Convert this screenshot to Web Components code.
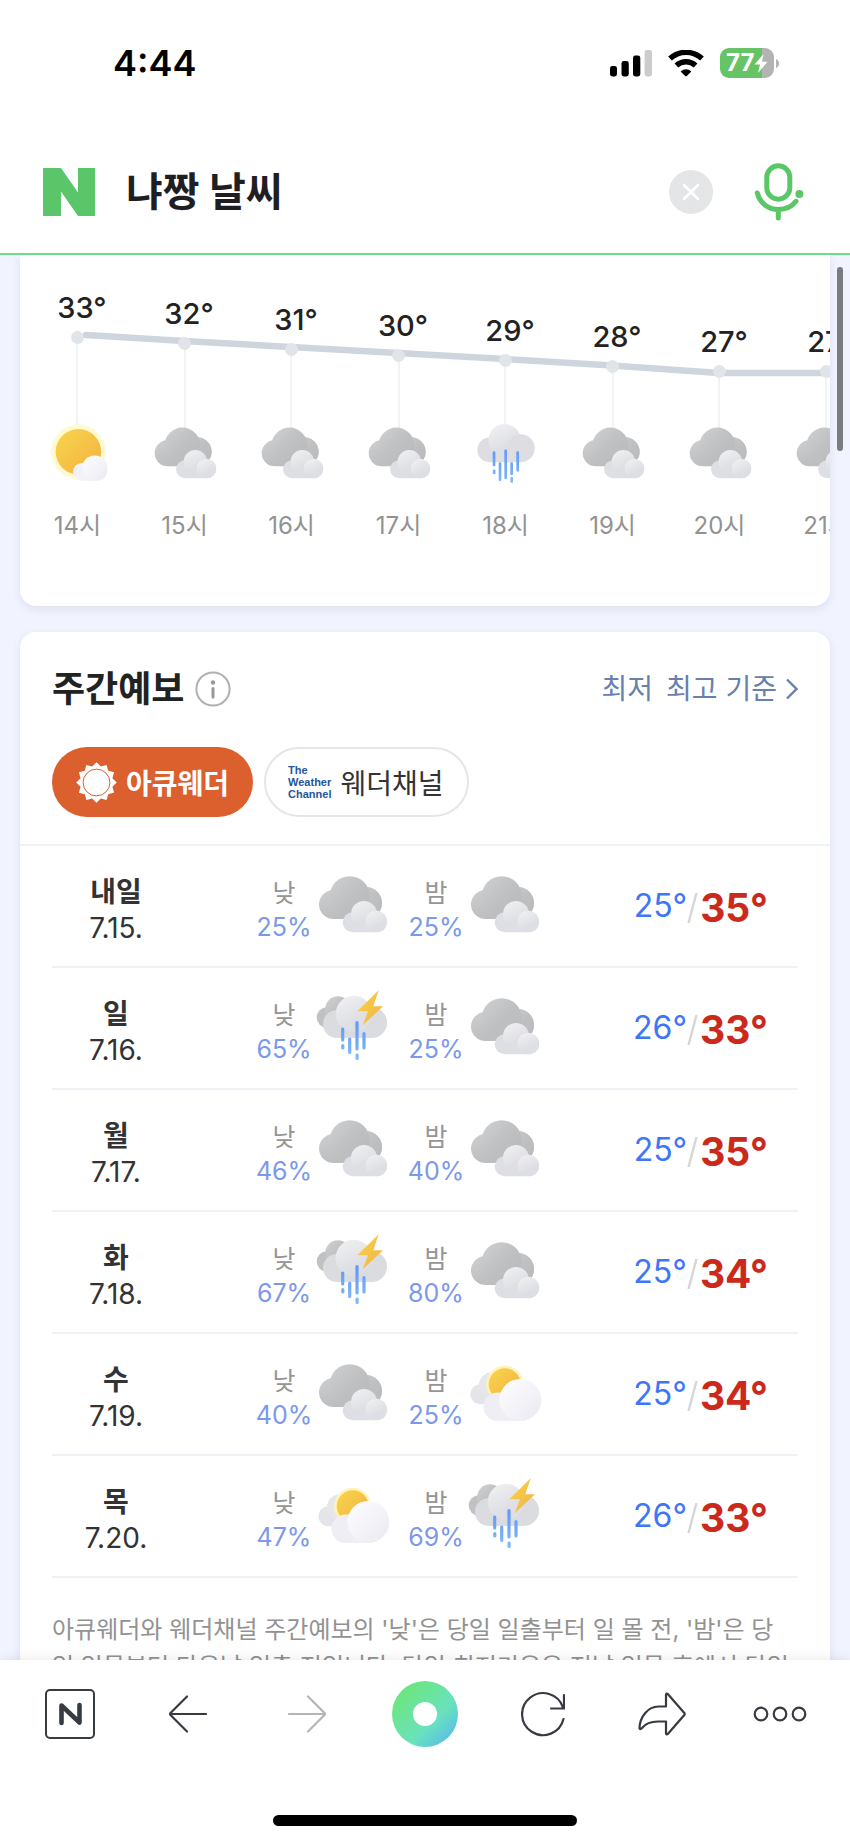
<!DOCTYPE html>
<html lang="ko">
<head>
<meta charset="utf-8">
<meta name="viewport" content="width=device-width, initial-scale=1">
<title>냐짱 날씨</title>
<style>
  body {
    margin: 0;
    font-family: Inter, "Noto Sans CJK KR", sans-serif;
    color: #222;
    background-color: #fff;
  }
</style>
</head>
<body>
<weather-app></weather-app>

<script>
/**
 * Creates a template element from markup.
 *
 * @param {string} html - The markup.
 * @returns {HTMLTemplateElement} The template.
 */
const createTemplate = (html) => {
  const template = document.createElement('template')
  template.innerHTML = html
  return template
}

// Drawings of the weather states, all on a 72 x 72 canvas.
const drawings = {
  cloudy: `
    <g fill="url(#dark)">
      <path d="M17.5 20A14.5 14.5 0 0 0 17.5 49H50A15.7 15.7 0 1 0 50 17Z"/>
      <circle cx="50.3" cy="33" r="15.7"/>
      <circle cx="33.7" cy="26.2" r="20"/>
    </g>
    <rect x="26.7" y="42.3" width="44.4" height="20" rx="10" fill="#dedfe4"/>
    <circle cx="48" cy="44" r="13" fill="url(#light)"/>
    <circle cx="60.3" cy="51.5" r="10.8" fill="url(#light)"/>`,
  sunny: `
    <circle cx="37" cy="33" r="30.5" fill="#fff9d4"/>
    <circle cx="37" cy="33" r="25.2" fill="url(#sun)"/>
    <rect x="31" y="45.4" width="38" height="19.6" rx="9.8" fill="#f1f1f8"/>
    <circle cx="55.2" cy="51" r="14" fill="url(#white)"/>`,
  partly: `
    <rect x="2.3" y="26.3" width="34" height="20" rx="10" fill="#e5e5e9"/>
    <circle cx="24" cy="27.3" r="13" fill="#e7e7eb"/>
    <circle cx="36.7" cy="26.3" r="18.5" fill="#fff3b5"/>
    <circle cx="36.7" cy="26.3" r="16" fill="url(#sun)"/>
    <rect x="15.4" y="34.4" width="50" height="28.6" rx="14.3" fill="#eeeef4"/>
    <circle cx="52.3" cy="42" r="21" fill="url(#white)"/>`,
  rain: `
    <rect x="4.8" y="17.3" width="52" height="27.2" rx="13.6" fill="#dddde2"/>
    <circle cx="35" cy="20.3" r="18" fill="url(#light)"/>
    <path d="M35 30H53V44.5H35Z" fill="#dddde2"/>
    <circle cx="53" cy="29.1" r="15.4" fill="#dddde2"/>
    <path stroke="url(#drop)" stroke-width="3" stroke-linecap="round" d="M23.3 34V47.5M23.4 54V56.5M29.9 46V64M36.2 32V62M42.8 46V57.5M42.9 62.5V66M49.5 34V53.5"/>`,
  storm: `
    <rect x=".7" y="15.3" width="30" height="20.4" rx="10.2" fill="#bfc1c3"/>
    <circle cx="22" cy="17" r="12.8" fill="url(#dark)"/>
    <rect x="7" y="18" width="60" height="28" rx="14" fill="#dbdce0"/>
    <circle cx="55.7" cy="30.6" r="15.4" fill="#dbdce0"/>
    <circle cx="37.7" cy="21.7" r="18" fill="url(#light)"/>
    <path d="M62.7 -1.7 41.3 19.3H52L46.7 33.3 67 14.3H57.3Z" fill="url(#sun)"/>
    <path stroke="url(#drop)" stroke-width="3.2" stroke-linecap="round" d="M26.7 37V48M26.8 53.5V56M33.7 47V60.5M41 30.5V57M41.1 63V66.5M48 41.5V56"/>`
}

customElements.define('weather-icon',
  /**
   * Represents a picture of a weather state.
   */
  class extends HTMLElement {
    constructor () {
      super()
      this.attachShadow({ mode: 'open' })
    }

    connectedCallback () {
      this.shadowRoot.innerHTML = `
<style>
    :host {
        display: block;
        width: var(--icon-size, 72px);
        height: var(--icon-size, 72px);
        flex: none;
    }

    svg {
        display: block;
        width: 100%;
        height: 100%;
        overflow: visible;
    }
</style>
<svg viewBox="0 0 72 72" aria-hidden="true">
    <defs>
        <linearGradient id="dark" x1="0" y1="0" x2="1" y2="1">
            <stop offset=".1" stop-color="#cbcdce"/><stop offset=".5" stop-color="#bfc0c2"/><stop offset="1" stop-color="#b7b9bb"/>
        </linearGradient>
        <linearGradient id="light" x1=".2" y1="0" x2=".7" y2="1">
            <stop offset="0" stop-color="#f0f0f2"/><stop offset=".7" stop-color="#dedfe4"/>
        </linearGradient>
        <linearGradient id="white" x1="0" y1="0" x2="1" y2="1">
            <stop offset=".15" stop-color="#fbfbfe"/><stop offset=".8" stop-color="#ededf4"/>
        </linearGradient>
        <linearGradient id="sun" x1="0" y1="0" x2="1" y2="1">
            <stop offset=".1" stop-color="#f8d14c"/><stop offset="1" stop-color="#f2b140"/>
        </linearGradient>
        <linearGradient id="drop" gradientUnits="userSpaceOnUse" x1="0" y1="30" x2="0" y2="68">
            <stop offset="0" stop-color="#5f98f7"/><stop offset="1" stop-color="#83bafa"/>
        </linearGradient>
    </defs>
    ${drawings[this.getAttribute('state')]}
</svg>`
    }
  }
)

const statusTemplate = createTemplate(`
<style>
    :host {
        display: flex;
        align-items: center;
        justify-content: space-between;
        height: 126px;
        padding: 0 71px 0 113px;
        color: #000;
    }

    time {
        font-size: 36px;
        font-weight: 600;
    }

    .system {
        display: flex;
        align-items: center;
        gap: 16px;
    }

    svg {
        display: block;
    }

    .battery {
        display: flex;
        align-items: center;
        gap: 2px;
    }

    .charge {
        display: flex;
        align-items: center;
        box-sizing: border-box;
        width: 54px;
        height: 30px;
        padding-left: 6px;
        border-radius: 9px;
        background: linear-gradient(90deg, #66c466 78%, #b3b3b3 78%);
        color: #fff;
        font-size: 24px;
        font-weight: 700;
        line-height: 30px;
    }
</style>
<time>4:44</time>
<div class="system">
    <svg width="42" height="27" viewBox="0 0 42 27">
        <rect y="16" width="7" height="10.5" rx="2.4"/><rect x="11.5" y="11" width="7.3" height="15.5" rx="2.4"/>
        <rect x="23" y="5.5" width="7.3" height="21" rx="2.4"/><rect x="34.6" width="7.4" height="26.5" rx="2.4" fill="#ccc"/>
    </svg>
    <svg width="36" height="27" viewBox="0 0 36 27">
        <g fill="none" stroke="#000" stroke-width="5.4"><path d="M2 8.6A23.5 23.5 0 0 1 34 8.6"/><path d="M8.4 15.5A14 14 0 0 1 27.6 15.5"/></g>
        <path d="M12.6 21.4Q18 17 23.4 21.4L18.8 26.1Q18 26.8 17.2 26.1Z"/>
    </svg>
    <div class="battery">
        <div class="charge">
            <span>77</span>
            <svg width="14" height="19" viewBox="0 0 14 19"><path fill="#fff" d="M9.500 0 .500 10.500H6L4 19 13.500 7.800H8Z"/></svg>
        </div>
        <svg width="3" height="9" viewBox="0 0 3 9"><path d="M0 0Q3 1.5 3 4.5T0 9Z" fill="#b3b3b3"/></svg>
    </div>
</div>
`)

customElements.define('status-bar',
  /**
   * Represents the status bar of the phone.
   */
  class extends HTMLElement {
    constructor () {
      super()
      this.attachShadow({ mode: 'open' }).appendChild(statusTemplate.content.cloneNode(true))
    }
  }
)

const searchTemplate = createTemplate(`
<style>
    :host {
        display: block;
        border-bottom: 2px solid #6fdc8b;
    }

    form {
        display: flex;
        align-items: center;
        box-sizing: border-box;
        height: 127px;
        padding: 4px 46px 0 43px;
    }

    a, button {
        display: block;
        flex: none;
        padding: 0;
        border: 0;
        background: none;
    }

    svg {
        display: block;
    }

    input {
        flex: 1;
        min-width: 0;
        margin: 0 31px;
        padding: 0;
        border: 0;
        outline: 0;
        background: none;
        font: 700 40px/60px Inter, "Noto Sans CJK KR", sans-serif;
        color: #1f1f23;
    }

    .voice {
        margin-left: 41px;
    }
</style>
<form>
    <a href="#" aria-label="NAVER">
        <svg width="52" height="48" viewBox="0 0 52 48"><path fill="#5bc569" d="M0 0H18L35 24.500V0H52V48H35L18 23.500V48H0Z"/></svg>
    </a>
    <input type="text" value="냐짱 날씨" aria-label="검색어">
    <button type="reset" aria-label="지우기">
        <svg width="44" height="44" viewBox="0 0 44 44"><circle cx="22" cy="22" r="22" fill="#e4e5e7"/><path d="M15 15 29 29M29 15 15 29" stroke="#fff" stroke-width="2.6" stroke-linecap="round"/></svg>
    </button>
    <button class="voice" type="button" aria-label="음성 검색">
        <svg width="50" height="58" viewBox="0 0 50 58" fill="none" stroke="#5ac766" stroke-width="5" stroke-linecap="round">
            <rect x="12.800" y="2.800" width="23" height="33.400" rx="11.500"/>
            <path d="M3.300 30C6 40 14 46.500 24.300 46.500C31.500 46.500 38 43.500 42 38.300M24.300 47V55"/>
            <circle cx="45.400" cy="31" r="4" fill="#5ac766" stroke="none"/>
        </svg>
    </button>
</form>
`)

customElements.define('search-bar',
  /**
   * Represents the search field on top of the page.
   */
  class extends HTMLElement {
    constructor () {
      super()
      this.attachShadow({ mode: 'open' }).appendChild(searchTemplate.content.cloneNode(true))
    }
  }
)

const hours = [
  [14, 33, 'sunny', 0], [15, 32, 'cloudy', 6], [16, 31, 'cloudy', 12], [17, 30, 'cloudy', 18],
  [18, 29, 'rain', 23], [19, 28, 'cloudy', 29], [20, 27, 'cloudy', 34], [21, 27, 'cloudy', 34]
]

const hourlyTemplate = createTemplate(`
<style>
    :host {
        display: block;
        position: relative;
        overflow: hidden;
        padding-bottom: 64px;
        border-radius: 0 0 16px 16px;
        background-color: #fff;
        --icon-size: 65px;
    }

    .graph {
        position: absolute;
        top: 0;
        left: 0;
    }

    ol {
        display: flex;
        position: relative;
        margin: 0;
        padding: 0 0 0 4px;
        list-style: none;
    }

    li {
        display: flex;
        flex-direction: column;
        align-items: center;
        flex: 0 0 107px;
    }

    .plot {
        display: flex;
        flex-direction: column;
        align-items: center;
        box-sizing: border-box;
        height: 167px;
    }

    strong {
        padding-left: 9px;
        font-size: 29px;
        font-weight: 500;
        line-height: 36px;
    }

    .dot {
        flex: none;
        width: 13px;
        height: 13px;
        margin-top: 5px;
        border-radius: 50%;
        background-color: #e1e5ea;
    }

    .stem {
        flex: 1;
        width: 2px;
        margin-bottom: -6px;
        background-color: #f2f3f5;
    }

    .hour {
        margin-top: 23px;
        font-size: 24px;
        line-height: 32px;
        color: #929292;
    }
</style>
<svg class="graph" width="860" height="140" aria-hidden="true">
    <polyline fill="none" stroke="#cfd5dc" stroke-width="6.500" stroke-linecap="round" stroke-linejoin="round" points="66,80 164,86 271,92 378,98 485,104 592,110.500 699,118 856,118"/>
</svg>
<ol>
    ${hours.map(([hour, temp, state, drop]) => `
    <li>
        <div class="plot" style="padding-top: ${35 + drop}px">
            <strong>${temp}°</strong>
            <span class="dot"></span>
            <span class="stem"></span>
        </div>
        <weather-icon state="${state}"></weather-icon>
        <span class="hour">${hour}시</span>
    </li>`).join('')}
</ol>
`)

customElements.define('hourly-forecast',
  /**
   * Represents the temperature graph by hour.
   */
  class extends HTMLElement {
    constructor () {
      super()
      this.attachShadow({ mode: 'open' }).appendChild(hourlyTemplate.content.cloneNode(true))
    }
  }
)

const days = [
  ['내일', '7.15.', 25, 'cloudy', 25, 'cloudy', 25, 35],
  ['일', '7.16.', 65, 'storm', 25, 'cloudy', 26, 33],
  ['월', '7.17.', 46, 'cloudy', 40, 'cloudy', 25, 35],
  ['화', '7.18.', 67, 'storm', 80, 'cloudy', 25, 34],
  ['수', '7.19.', 40, 'cloudy', 25, 'partly', 25, 34],
  ['목', '7.20.', 47, 'partly', 69, 'storm', 26, 33]
]

/**
 * Builds the cell for one half of a day.
 *
 * @param {string} name - The name of the half.
 * @param {number} chance - The chance of rain.
 * @param {string} state - The weather state.
 * @returns {string} The markup.
 */
const halfDay = (name, chance, state) => `
        <td>
            <div class="half">
                <div class="chance"><span>${name}</span><b>${chance}%</b></div>
                <weather-icon state="${state}"></weather-icon>
            </div>
        </td>`

const weeklyTemplate = createTemplate(`
<style>
    :host {
        display: block;
        border-radius: 16px;
        background-color: #fff;
    }

    header {
        display: flex;
        align-items: center;
        justify-content: space-between;
        padding: 32px 32px 0;
    }

    .title {
        display: flex;
        align-items: center;
        gap: 11px;
    }

    h2 {
        margin: 0;
        font-size: 36px;
        font-weight: 700;
        line-height: 50px;
    }

    button {
        padding: 0;
        border: 0;
        background: none;
        font: inherit;
    }

    svg {
        display: block;
    }

    .basis {
        display: flex;
        align-items: center;
        gap: 9px;
        font-size: 28px;
        line-height: 40px;
        text-decoration: none;
        color: #6880b0;
    }

    .basis span:first-child {
        margin-right: 4px;
    }

    .tabs {
        display: flex;
        gap: 11px;
        padding: 33px 32px 27px;
        border-bottom: 2px solid #eef2f7;
    }

    .tabs button {
        display: flex;
        align-items: center;
        box-sizing: border-box;
        height: 70px;
        border-radius: 35px;
        font-size: 28px;
    }

    .tabs .active {
        gap: 9px;
        padding: 0 24px;
        background-color: #dc5f2e;
        font-weight: 700;
        color: #fff;
    }

    .tabs .other {
        gap: 9px;
        padding: 0 23px 0 22px;
        border: 2px solid #e4e6e8;
        background-color: #fff;
        color: #333;
    }

    .logo {
        font: 700 11px/12px "Liberation Sans", sans-serif;
        text-align: left;
        color: #24569c;
    }

    table {
        width: calc(100% - 64px);
        margin: 0 32px;
        border-collapse: separate;
        border-spacing: 0;
        table-layout: fixed;
    }

    .day-column {
        width: 204px;
    }

    .half-column {
        width: 152px;
    }

    th, td {
        box-sizing: border-box;
        height: 122px;
        padding: 0;
        border-bottom: 2px solid #eef2f7;
    }

    th {
        padding: 8px 76px 0 0;
        font-weight: 400;
        text-align: center;
        color: #333;
    }

    th strong, th span {
        display: block;
        font-size: 28px;
        line-height: 36px;
    }

    .half {
        display: flex;
        align-items: center;
        gap: 4px;
    }

    .chance {
        display: flex;
        flex-direction: column;
        align-items: center;
        width: 56px;
        padding-top: 8px;
        font-size: 25px;
        line-height: 34px;
        color: #959595;
    }

    .chance b {
        font-weight: 400;
        color: #7c98ea;
    }

    .temps {
        display: flex;
        align-items: center;
        justify-content: flex-end;
        padding: 3px 30px 0 0;
        line-height: 48px;
    }

    .low {
        padding-bottom: 4px;
        font-size: 32px;
        color: #3d76f6;
    }

    .temps svg {
        margin-right: 2px;
    }

    .high {
        font-size: 39px;
        font-weight: 700;
        color: #cb291b;
    }

    p {
        margin: 0;
        padding: 33px 20px 32px 32px;
        font-size: 24px;
        line-height: 37px;
        color: #929292;
    }

    .nowrap {
        white-space: nowrap;
    }
</style>
<header>
    <div class="title">
        <h2>주간예보</h2>
        <button type="button" aria-label="안내">
            <svg width="36" height="36" viewBox="0 0 36 36"><circle cx="18" cy="18" r="16.600" fill="none" stroke="#b0b0b0" stroke-width="2"/><circle cx="18" cy="11.500" r="2.200" fill="#999"/><path d="M18 17.500V26" stroke="#999" stroke-width="3" stroke-linecap="round"/></svg>
        </button>
    </div>
    <a class="basis" href="#">
        <span>최저</span>
        <span>최고 기준</span>
        <svg width="12" height="22" viewBox="0 0 12 22" fill="none" stroke="#6880b0" stroke-width="2.400"><path d="M1 1.500 10.500 11 1 20.500"/></svg>
    </a>
</header>
<div class="tabs">
    <button class="active" type="button">
        <svg width="41" height="41" viewBox="-20.500 -20.500 41 41"><polygon fill="#fff" points="${Array.from({ length: 24 }, (_, i) => {
          const radius = i % 2 ? 16.5 : 20.3
          const angle = i * Math.PI / 12
          return `${(radius * Math.sin(angle)).toFixed(1)},${(-radius * Math.cos(angle)).toFixed(1)}`
        }).join(' ')}"/><circle r="13.400" fill="#fff" stroke="#dc5f2e"/></svg>
        <span>아큐웨더</span>
    </button>
    <button class="other" type="button">
        <span class="logo">The<br>Weather<br>Channel</span>
        <span>웨더채널</span>
    </button>
</div>
<table>
    <colgroup><col class="day-column"><col class="half-column"><col class="half-column"><col></colgroup>
    <tbody>
    ${days.map(([day, date, dayChance, dayState, nightChance, nightState, low, high]) => `
    <tr>
        <th scope="row"><strong>${day}</strong><span>${date}</span></th>
        ${halfDay('낮', dayChance, dayState)}
        ${halfDay('밤', nightChance, nightState)}
        <td>
            <div class="temps">
                <span class="low">${low}°</span>
                <svg width="11" height="30" viewBox="0 0 11 30"><path d="M1.500 30 9.500 0" stroke="#d6d6d6" stroke-width="2.400"/></svg>
                <span class="high">${high}°</span>
            </div>
        </td>
    </tr>`).join('')}
    </tbody>
</table>
<p>아큐웨더와 웨더채널 주간예보의 '낮'은 당일 일출부터 일 몰 전, '밤'은 당<br><span class="nowrap">일 일몰부터 다음날 일출 전입니다. 당일 최저기온은 전날 일몰 후에서 당일</span></p>
`)

customElements.define('weekly-forecast',
  /**
   * Represents the forecast table for the week.
   */
  class extends HTMLElement {
    constructor () {
      super()
      this.attachShadow({ mode: 'open' }).appendChild(weeklyTemplate.content.cloneNode(true))
    }
  }
)

const toolbarTemplate = createTemplate(`
<style>
    :host {
        display: block;
        position: relative;
        background-color: #fff;
        box-shadow: 0 0 12px rgba(0, 0, 0, 0.1);
    }

    nav {
        display: grid;
        grid-template-columns: repeat(7, 1fr);
        height: 108px;
        padding: 0 11px;
    }

    button {
        display: flex;
        align-items: center;
        justify-content: center;
        padding: 0;
        border: 0;
        background: none;
    }

    .indicator {
        width: 304px;
        height: 11px;
        margin: 47px auto 17px;
        border-radius: 6px;
        background-color: #000;
    }
</style>
<nav>
    <button type="button" aria-label="홈">
        <svg width="50" height="50" viewBox="0 0 50 50" fill="none" stroke="#373c43"><rect x="1" y="1" width="48" height="48" rx="4" stroke-width="2"/><path d="M16.500 34V16.500L34.500 33.500V16" stroke-width="4.600" stroke-linecap="round" stroke-linejoin="round"/></svg>
    </button>
    <button type="button" aria-label="뒤로">
        <svg width="38" height="38" viewBox="0 0 38 38" fill="none" stroke="#373a40" stroke-width="2.200" stroke-linecap="round" stroke-linejoin="round"><path d="M18 1.500 1.500 18Q.600 19 1.500 20L18 36.500M1.500 19H37"/></svg>
    </button>
    <button type="button" aria-label="앞으로">
        <svg width="38" height="38" viewBox="0 0 38 38" fill="none" stroke="#b5b5b5" stroke-width="2.200" stroke-linecap="round" stroke-linejoin="round"><path d="M20 1.500 36.500 18Q37.400 19 36.500 20L20 36.500M36.500 19H1"/></svg>
    </button>
    <button type="button" aria-label="그린닷">
        <svg width="66" height="66" viewBox="0 0 66 66"><defs><linearGradient id="ring" x1=".1" y1=".1" x2=".9" y2=".9"><stop offset="0" stop-color="#6de678"/><stop offset=".65" stop-color="#69e2bd"/><stop offset="1" stop-color="#5bbde8"/></linearGradient></defs><circle cx="33" cy="33" r="33" fill="url(#ring)"/><circle cx="33" cy="33" r="12" fill="#fff"/></svg>
    </button>
    <button type="button" aria-label="새로고침">
        <svg width="44" height="46" viewBox="0 0 44 46" fill="none" stroke="#373a40" stroke-width="2.200" stroke-linecap="round" stroke-linejoin="round"><path d="M42.500 28A21 21 0 1 1 42 16.500M43 4V17.500H30"/></svg>
    </button>
    <button type="button" aria-label="공유">
        <svg width="48" height="44" viewBox="0 0 48 44" fill="none" stroke="#373a40" stroke-width="2.200" stroke-linecap="round" stroke-linejoin="round"><path d="M28 14.500V2.500Q28.500 .800 29.800 2L46.300 21Q47 22 46.300 23L29.800 42Q28.500 43.200 28 41.500V29.500H20C12 29.500 7.500 31.500 4 36Q2 38 1.500 36.500C1.500 25 10 14.500 20.500 14.500Z"/></svg>
    </button>
    <button type="button" aria-label="더보기">
        <svg width="54" height="16" viewBox="0 0 54 16" fill="none" stroke="#373a40" stroke-width="2.200"><circle cx="8" cy="8" r="6.300"/><circle cx="27" cy="8" r="6.300"/><circle cx="46" cy="8" r="6.300"/></svg>
    </button>
</nav>
<div class="indicator"></div>
`)

customElements.define('tool-bar',
  /**
   * Represents the browser toolbar at the bottom.
   */
  class extends HTMLElement {
    constructor () {
      super()
      this.attachShadow({ mode: 'open' }).appendChild(toolbarTemplate.content.cloneNode(true))
    }
  }
)

const appTemplate = createTemplate(`
<style>
    :host {
        display: flex;
        flex-direction: column;
        height: 100vh;
    }

    main {
        display: flex;
        position: relative;
        flex-direction: column;
        gap: 26px;
        flex: 1;
        min-height: 0;
        overflow: hidden;
        padding: 0 20px;
        background-color: #f1f4fe;
    }

    main > * {
        flex: none;
    }

    hourly-forecast, weekly-forecast {
        box-shadow: 0 3px 8px rgba(70, 80, 130, 0.12);
    }

    .thumb {
        position: absolute;
        top: 12px;
        right: 7px;
        width: 6px;
        height: 184px;
        border-radius: 3px;
        background-color: #7b7c80;
    }
</style>
<status-bar></status-bar>
<search-bar></search-bar>
<main>
    <hourly-forecast></hourly-forecast>
    <weekly-forecast></weekly-forecast>
    <span class="thumb"></span>
</main>
<tool-bar></tool-bar>
`)

customElements.define('weather-app',
  /**
   * Represents the whole screen.
   */
  class extends HTMLElement {
    constructor () {
      super()
      this.attachShadow({ mode: 'open' }).appendChild(appTemplate.content.cloneNode(true))
    }
  }
)
</script>
</body>
</html>
